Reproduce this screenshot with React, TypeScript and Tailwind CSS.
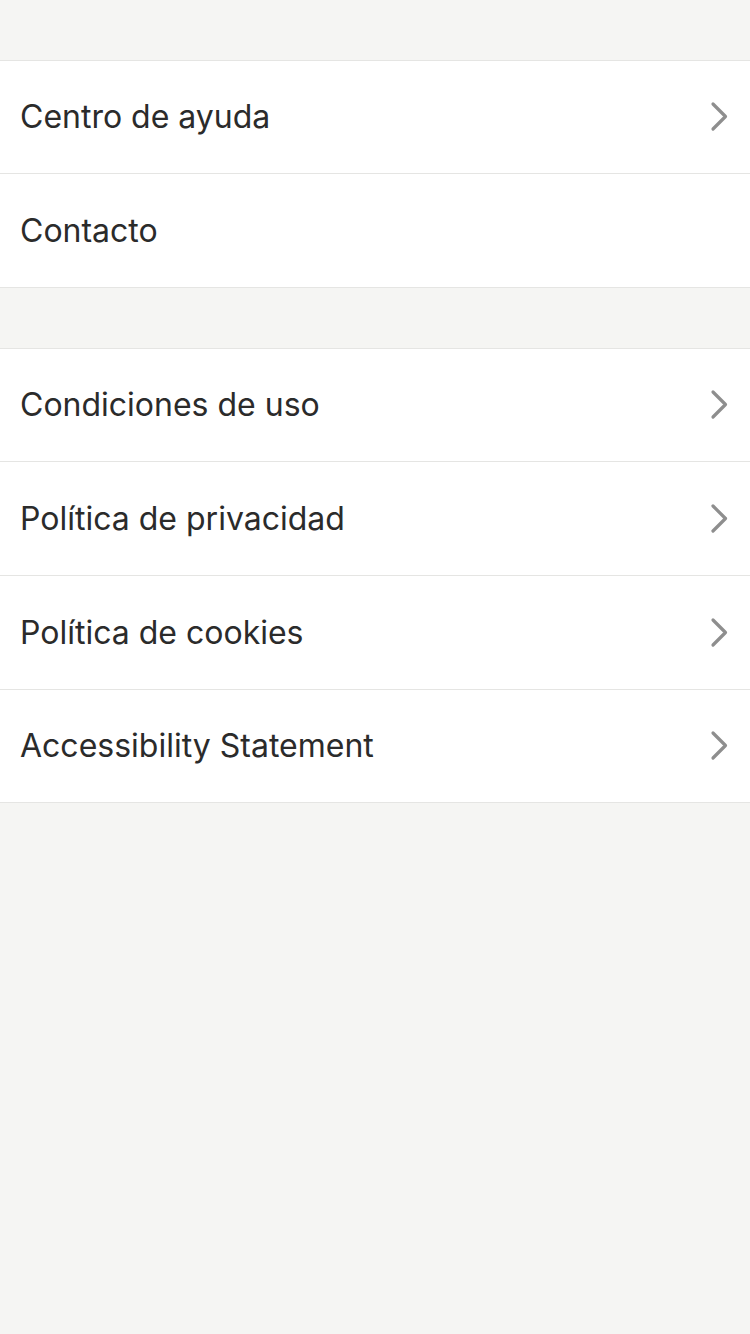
import React from "react";

type Item = { label: string; chevron?: boolean; h: string };

const groupOne: Item[] = [
  { label: "Centro de ayuda", chevron: true, h: "h-[113px]" },
  { label: "Contacto", h: "h-[114px]" },
];

const groupTwo: Item[] = [
  { label: "Condiciones de uso", chevron: true, h: "h-[113px]" },
  { label: "Política de privacidad", chevron: true, h: "h-[114px]" },
  { label: "Política de cookies", chevron: true, h: "h-[114px]" },
  { label: "Accessibility Statement", chevron: true, h: "h-[113px]" },
];

function Chevron() {
  return (
    <svg width="24" height="32" viewBox="0 0 24 32" fill="none" className="mr-[18px]">
      <path
        d="M5 3 L17.5 15.5 L5 28"
        stroke="#8e8e8e"
        strokeWidth="3.2"
        strokeLinecap="round"
        strokeLinejoin="round"
      />
    </svg>
  );
}

function Row({ item }: { item: Item }) {
  return (
    <div
      className={`${item.h} flex items-center justify-between border-b border-[#e5e5e3] bg-white pl-[20px]`}
    >
      <span className="text-[32px] leading-none text-[#2b2b2b]">{item.label}</span>
      {item.chevron && <Chevron />}
    </div>
  );
}

export default function App() {
  return (
    <div
      className="min-h-[1334px] w-[750px] bg-[#f5f5f3]"
      style={{ fontFamily: "Inter, 'Noto Sans', sans-serif" }}
    >
      <div className="h-[60px]" />
      <div className="border-t border-[#e5e5e3]">
        {groupOne.map((it) => (
          <Row key={it.label} item={it} />
        ))}
      </div>
      <div className="h-[60px]" />
      <div className="border-t border-[#e5e5e3]">
        {groupTwo.map((it) => (
          <Row key={it.label} item={it} />
        ))}
      </div>
    </div>
  );
}
